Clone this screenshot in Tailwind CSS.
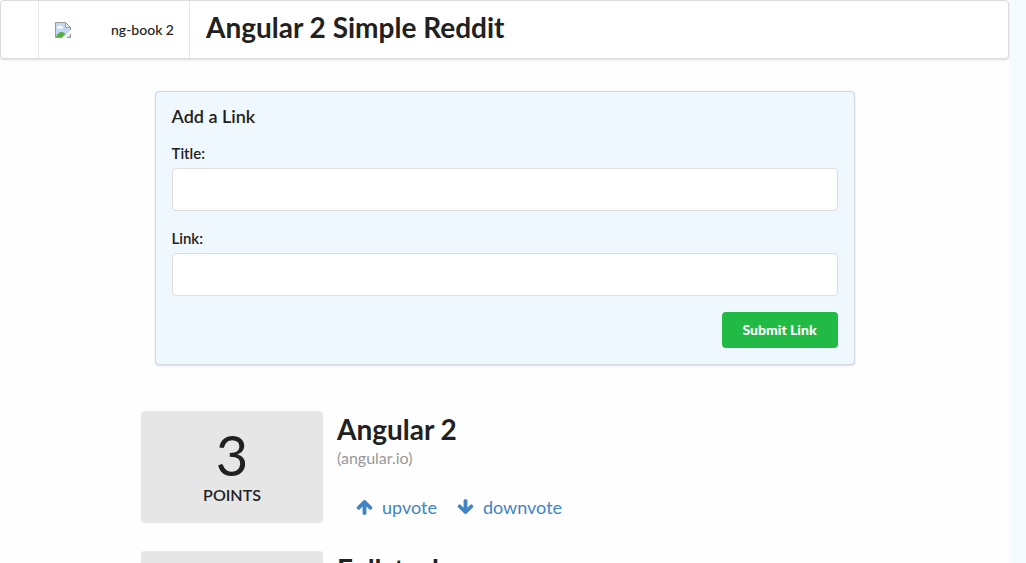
<!DOCTYPE html>
<html lang="en">
<head>
<meta charset="utf-8">
<meta name="viewport" content="width=device-width, initial-scale=1">
<title>Angular 2 Simple Reddit</title>
<script src="https://cdn.jsdelivr.net/npm/@tailwindcss/browser@4"></script>
</head>
<body class="h-screen overflow-hidden bg-[#f6fbff] pr-[17px] font-['Lato',sans-serif] text-[#212121]">
<div class="min-h-full bg-[#fefefe]">
  <header class="flex h-[59px] items-stretch rounded border border-[#dcdcdd] bg-white shadow-[0_1px_2px_rgba(34,36,38,0.15)]">
    <div class="w-[37px]"></div>
    <a href="#" class="flex w-[152px] items-center justify-between border-x border-[#e8e8e9] pr-[15px] pl-4 text-sm font-medium">
      <svg class="size-4" viewBox="0 0 16 16" aria-label="logo" role="img">
        <path d="M.5.5h10l5 5v10H.5z" fill="#c3d7f7"/>
        <path d="M2 6.500a1.500 1.500 0 0 1 1.500-2 2 2 0 0 1 3.500 0 1.300 1.300 0 0 1 1 2z" fill="#fff"/>
        <path d="M1 15c1-3 3-5 5.500-5 2 0 3 1 4 2l-3 3z" fill="#56ad3b"/>
        <path d="M7 16l9-8v3l-5 5z" fill="#fff"/>
        <path d="M7 15.500H.5V.5h10l5 5V8M15.500 12v3.500H12" fill="none" stroke="#9a9a9a"/>
        <path d="M10.500.5v5h5z" fill="#fff" stroke="#9a9a9a"/>
      </svg>
      <span>ng-book 2</span>
    </a>
    <h1 class="px-4 pt-2 text-[28px] leading-9 font-bold">Angular 2 Simple Reddit</h1>
  </header>

  <main class="mx-auto max-w-[727px] pt-8">
    <form class="mx-auto max-w-[700px] rounded border border-[#d0d8de] bg-[#f0f8ff] p-4 shadow-[0_1px_2px_rgba(34,36,38,0.15)]">
      <h2 class="-mt-1 text-lg leading-6 font-semibold">Add a Link</h2>
      <div class="mt-[15px]">
        <label for="title" class="block text-[15px] leading-5 font-semibold">Title:</label>
        <input id="title" name="title" type="text" class="mt-[5px] block h-[43px] w-full rounded border border-[#dcdedf] bg-white px-4">
      </div>
      <div class="mt-[17px]">
        <label for="link" class="block text-[15px] leading-5 font-semibold">Link:</label>
        <input id="link" name="link" type="text" class="mt-[5px] block h-[43px] w-full rounded border border-[#dcdedf] bg-white px-4">
      </div>
      <button type="button" class="mt-4 ml-auto block h-9 w-29 rounded bg-[#21ba45] text-sm font-black text-white">Submit Link</button>
    </form>

    <section class="mt-[46px] flex flex-col gap-7">
      <article class="flex gap-3.5">
        <div class="flex h-28 w-[182px] shrink-0 flex-col items-center rounded bg-[#e6e6e6] pt-4">
          <span class="text-[56px] leading-14">3</span>
          <span class="mt-0.5 text-base leading-5 font-semibold">POINTS</span>
        </div>
        <div>
          <h2 class="text-[28px] leading-9 font-bold">Angular 2</h2>
          <p class="text-base leading-[22px] text-[#999999]">(angular.io)</p>
          <div class="mt-[26px] ml-[19px] flex gap-5 text-lg leading-6 text-[#4183c4]">
            <a href="#" class="flex items-center gap-[9px]"><svg class="h-[18px] w-[17px]" viewBox="0 0 1664 1792" fill="currentColor" aria-hidden="true"><path d="M1611 971q0 51-37 90l-75 75q-38 38-91 38-54 0-90-38l-294-293v704q0 52-37.500 84.500t-90.500 32.500h-128q-53 0-90.500-32.500t-37.500-84.500v-704l-294 293q-36 38-90 38t-90-38l-75-75q-38-38-38-90 0-53 38-91l651-651q35-37 90-37 54 0 91 37l651 651q37 39 37 91z"/></svg>upvote</a>
            <a href="#" class="flex items-center gap-[9px]"><svg class="h-[18px] w-[17px]" viewBox="0 0 1664 1792" fill="currentColor" aria-hidden="true"><path d="M1611 832q0 53-37 90l-651 652q-39 37-91 37-53 0-90-37l-651-652q-38-36-38-90 0-53 38-91l74-75q39-37 91-37 53 0 90 37l294 294v-704q0-52 38-90t90-38h128q52 0 90 38t38 90v704l294-294q37-37 90-37 52 0 91 37l75 75q37 39 37 91z"/></svg>downvote</a>
          </div>
        </div>
      </article>
      <article class="flex gap-3.5">
        <div class="h-28 w-[182px] shrink-0 rounded bg-[#e6e6e6]"></div>
        <h2 class="text-[28px] leading-9 font-bold">Fullstack</h2>
      </article>
    </section>
  </main>
</div>
</body>
</html>
